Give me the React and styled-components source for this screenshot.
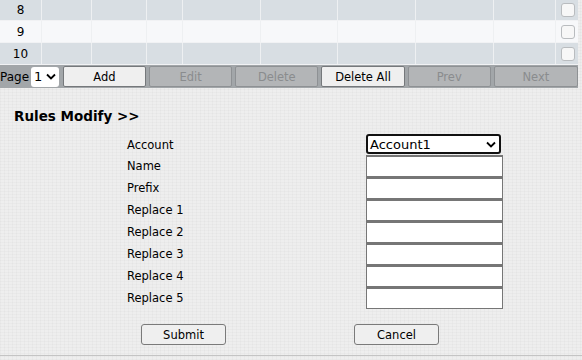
import { Fragment } from 'react';
import styled, { createGlobalStyle } from 'styled-components';

const Global = createGlobalStyle`
  html, body {
    margin: 0;
    padding: 0;
    background: #eeeeee;
    font-family: "DejaVu Sans", Verdana, sans-serif;
    font-size: 11.5px;
    color: #000;
  }
`;

const Page = styled.div`
  width: 582px;
  height: 360px;
  overflow: hidden;
  background-color: #eeeeee;
  background-image:
    repeating-linear-gradient(0deg, rgba(0,0,0,0.02) 0 1px, transparent 1px 3px),
    repeating-linear-gradient(90deg, rgba(0,0,0,0.02) 0 1px, transparent 1px 4px);
`;

const COLS = '42px 50px 55px 36px 78px 77px 78px 78px 62px 22px';

const Table = styled.div`
  width: 578px;
`;

const Row = styled.div`
  display: grid;
  grid-template-columns: ${COLS};
  height: ${p => (p.$first ? 20 : 21)}px;
  border-bottom: 1px solid #f1f2f4;
  background: ${p => (p.$alt ? '#f7f8fa' : '#d8dee3')};
`;

const Cell = styled.div`
  display: flex;
  align-items: center;
  justify-content: center;
  font-size: 12px;
  border-right: 1px solid #eef0f2;
  &:last-child { border-right: none; }
`;

const Check = styled.span`
  width: 12px;
  height: 12px;
  border: 1px solid #b9bcbf;
  border-radius: 3px;
  background: #f7f7f7;
  margin-left: 2px;
`;

const Toolbar = styled.div`
  display: flex;
  align-items: center;
  gap: 3px;
  width: 578px;
  height: 23px;
  background: #a2a6a9;
  box-sizing: border-box;
`;

const PageLabel = styled.span`
  font-size: 12px;
  margin-right: -1px;
`;

const PageSelect = styled.div`
  display: flex;
  align-items: center;
  justify-content: space-between;
  width: 28px;
  height: 20px;
  box-sizing: border-box;
  background: #fff;
  border-radius: 3px;
  padding: 0 3px;
  font-size: 13px;
`;

const ToolButton = styled.div`
  width: ${p => p.$w}px;
  height: 21px;
  box-sizing: border-box;
  display: flex;
  align-items: center;
  justify-content: center;
  border: 1px solid ${p => (p.$disabled ? '#8e9194' : '#75787b')};
  border-radius: 2px;
  background: ${p => (p.$disabled ? '#b3b5b7' : '#efefef')};
  color: ${p => (p.$disabled ? '#8a8c8e' : '#000')};
`;

const Form = styled.div`
  padding-top: 18px;
`;

const Title = styled.div`
  font-weight: bold;
  font-size: 13.5px;
  padding-left: 14px;
  height: 20px;
  line-height: 20px;
`;

const Fields = styled.div`
  display: grid;
  grid-template-columns: 239px 137px;
  grid-auto-rows: 22px;
  grid-template-rows: 21px;
  padding-left: 127px;
  margin-top: 8px;
`;

const Label = styled.div`
  line-height: 21px;
  padding-top: 1px;
`;

const Select = styled.div`
  height: 20px;
  width: 135px;
  box-sizing: border-box;
  border: 2px solid #111;
  border-radius: 3px;
  background: #fff;
  display: flex;
  align-items: center;
  justify-content: space-between;
  padding: 0 3px 0 2px;
  font-size: 13px;
`;

const Input = styled.div`
  height: 22px;
  width: 137px;
  box-sizing: border-box;
  border: 1px solid #767676;
  border-top-width: 2px;
  background: #fff;
`;

const Actions = styled.div`
  display: flex;
  gap: 128px;
  padding-left: 141px;
  margin-top: 15px;
  padding-bottom: 10px;
  border-bottom: 1px solid #c4c4c4;
`;

const FormButton = styled.div`
  width: 85px;
  height: 21px;
  box-sizing: border-box;
  border: 1px solid #7a7a7a;
  border-radius: 3px;
  background: #efefef;
  display: flex;
  align-items: center;
  justify-content: center;
`;

const Chevron = () => (
  <svg width="10" height="7" viewBox="0 0 10 7">
    <path d="M1 1.5 L5 5.5 L9 1.5" fill="none" stroke="#000" strokeWidth="1.8" />
  </svg>
);

const rows = ['8', '9', '10'];
const fields = ['Name', 'Prefix', 'Replace 1', 'Replace 2', 'Replace 3', 'Replace 4', 'Replace 5'];

export default function App() {
  return (
    <Page>
      <Global />
      <Table>
        {rows.map((n, i) => (
          <Row key={n} $first={i === 0} $alt={i === 1}>
            <Cell>{n}</Cell>
            <Cell /><Cell /><Cell /><Cell /><Cell /><Cell /><Cell /><Cell />
            <Cell><Check /></Cell>
          </Row>
        ))}
        <Toolbar>
          <PageLabel>Page</PageLabel>
          <PageSelect>1<Chevron /></PageSelect>
          <ToolButton $w={84} style={{ marginLeft: 1 }}>Add</ToolButton>
          <ToolButton $w={84} $disabled>Edit</ToolButton>
          <ToolButton $w={84} $disabled>Delete</ToolButton>
          <ToolButton $w={84}>Delete All</ToolButton>
          <ToolButton $w={84} $disabled>Prev</ToolButton>
          <ToolButton $w={85} $disabled>Next</ToolButton>
        </Toolbar>
      </Table>
      <Form>
        <Title>Rules Modify &gt;&gt;</Title>
        <Fields>
          <Label>Account</Label>
          <Select>Account1<Chevron /></Select>
          {fields.map(f => (
            <Fragment key={f}>
              <Label>{f}</Label>
              <Input />
            </Fragment>
          ))}
        </Fields>
        <Actions>
          <FormButton>Submit</FormButton>
          <FormButton>Cancel</FormButton>
        </Actions>
      </Form>
    </Page>
  );
}
